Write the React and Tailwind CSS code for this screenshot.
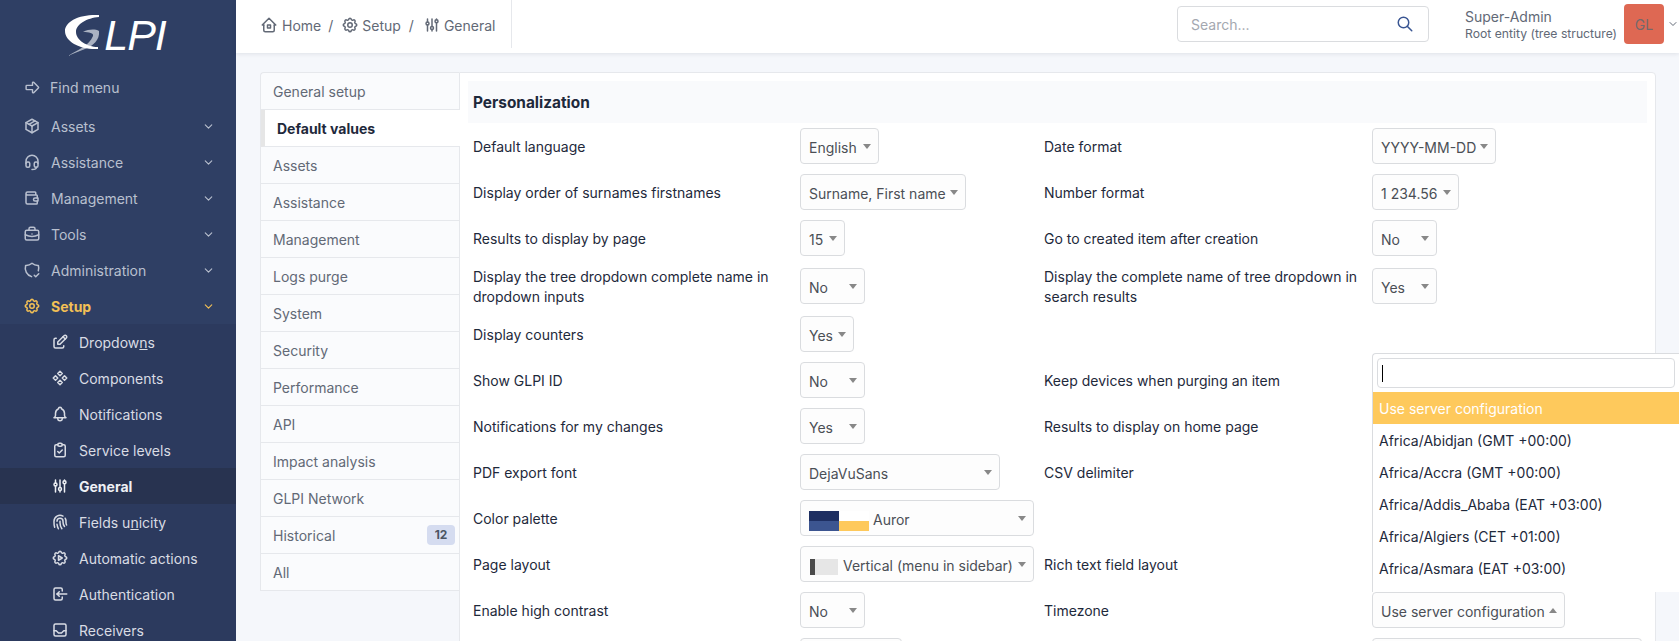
import React from 'react';
import {
  TbArrowBigRight, TbPackage, TbHeadset, TbWallet, TbBriefcase, TbShieldCheck, TbSettings,
  TbEdit, TbComponents, TbBell, TbClipboardCheck, TbAdjustments, TbFingerprint,
  TbSettingsAutomation, TbLogin, TbInbox, TbChevronDown, TbSearch, TbHome2,
} from 'react-icons/tb';

const topMenu = [
  { label: 'Assets', icon: TbPackage },
  { label: 'Assistance', icon: TbHeadset },
  { label: 'Management', icon: TbWallet },
  { label: 'Tools', icon: TbBriefcase },
  { label: 'Administration', icon: TbShieldCheck },
];

const subMenu = [
  { label: <>Dropdow<u>n</u>s</>, icon: TbEdit },
  { label: 'Components', icon: TbComponents },
  { label: 'Notifications', icon: TbBell },
  { label: 'Service levels', icon: TbClipboardCheck },
  { label: 'General', icon: TbAdjustments, active: true },
  { label: <>Fields u<u>n</u>icity</>, icon: TbFingerprint },
  { label: 'Automatic actions', icon: TbSettingsAutomation },
  { label: 'Authentication', icon: TbLogin },
  { label: 'Receivers', icon: TbInbox },
];

const tabs = [
  'General setup', 'Default values', 'Assets', 'Assistance', 'Management', 'Logs purge', 'System',
  'Security', 'Performance', 'API', 'Impact analysis', 'GLPI Network', 'Historical', 'All',
];

const zones = [
  'Africa/Abidjan (GMT +00:00)',
  'Africa/Accra (GMT +00:00)',
  'Africa/Addis_Ababa (EAT +03:00)',
  'Africa/Algiers (CET +01:00)',
  'Africa/Asmara (EAT +03:00)',
];

const Logo = () => (
  <div className="flex items-start justify-center h-[69px] pt-[14px] pr-[5px]">
    <svg width="36" height="44" viewBox="0 0 36 44" className="shrink-0">
      <path d="M3 42 C12 36 24 32 28 22 C29 19 24 18 18 18 C24 15 30 15 34 17 C35 26 28 32 20 35 C14 37 8 40 3 42Z" fill="#aab2c2" />
      <path d="M34 1 C15 0 0 7 0 17 C0 28 16 36 33 35 L33 33 C22 33 11 26 11 18 C11 10 22 4 34 3Z" fill="#fff" />
    </svg>
    <span className="text-white text-[43px] leading-[42px] italic font-['Liberation_Sans',sans-serif] tracking-[-1px] ml-[3px]">LPI</span>
  </div>
);

const Select = ({ w, children, up }) => (
  <div className={`${w} h-9 flex items-center justify-between pl-[8px] pr-[7px] border border-[#dadcdf] rounded bg-[#fdfdfd] text-[#4b4f56] whitespace-nowrap`}>
    <span className="flex items-center pt-[2px]">{children}</span>
    <span className={up
      ? 'w-0 h-0 border-x-4 border-x-transparent border-b-[5px] border-b-[#888]'
      : 'w-0 h-0 border-x-4 border-x-transparent border-t-[5px] border-t-[#888]'} />
  </div>
);

const Row = ({ h = 'h-[46px]', label, left, label2, right }) => (
  <div className={`grid grid-cols-[327px_244px_328px_1fr] items-center ${h}`}>
    <div className="leading-[20px] pr-2 pt-px">{label}</div>
    <div>{left}</div>
    <div className="leading-[20px] pr-2 pt-px">{label2}</div>
    <div>{right}</div>
  </div>
);

const Sidebar = () => (
  <aside className="w-[236px] shrink-0 h-full bg-[#2f3f64] text-[#b9c0cf] overflow-hidden">
    <Logo />
    <div className="flex items-center h-9 pl-[24px] gap-[9px]">
      <TbArrowBigRight size={17} />
      <span>Find menu</span>
    </div>
    <div className="h-[3px]" />
    {topMenu.map(({ label, icon: Icon }) => (
      <div key={label} className="flex items-center h-9 pl-[23px] pr-[21px]">
        <Icon size={18} />
        <span className="ml-[10px] flex-1">{label}</span>
        <TbChevronDown size={13} />
      </div>
    ))}
    <div className="flex items-center h-9 pl-[23px] pr-[21px] text-[#f3c055]">
      <TbSettings size={18} />
      <span className="ml-[10px] flex-1 font-bold">Setup</span>
      <TbChevronDown size={13} />
    </div>
    <div className="bg-[#2c3a5e] text-[#d9dce4]">
      {subMenu.map(({ label, icon: Icon, active }, i) => (
        <div key={i} className={`flex items-center h-9 pl-[51px] ${active ? 'bg-[#283350] font-bold text-[#eef0f4]' : ''}`}>
          <Icon size={18} />
          <span className="ml-[10px]">{label}</span>
        </div>
      ))}
    </div>
  </aside>
);

const Header = () => (
  <header className="h-[53px] shrink-0 bg-white shadow-[0_1px_4px_rgba(30,41,59,0.1)] flex items-start text-[#626976]">
    <div className="h-12 w-[276px] border-r border-[#e6e8ec] flex items-center pl-[24px] pt-[2px] whitespace-nowrap">
      <TbHome2 size={18} />
      <span className="ml-1">Home</span>
      <span className="ml-[7px] mr-[8px]">/</span>
      <TbSettings size={18} />
      <span className="ml-[3px]">Setup</span>
      <span className="ml-[8px] mr-[9px]">/</span>
      <TbAdjustments size={18} />
      <span className="ml-[3px]">General</span>
    </div>
    <div className="flex-1 flex items-start pt-[6px] justify-end">
      <div className="w-[252px] h-9 border border-[#dadcdf] rounded flex items-center justify-between pl-[13px] pr-[14px]">
        <span className="text-[#a4a8b0]">Search...</span>
        <TbSearch size={18} className="text-[#3a5693]" />
      </div>
      <div className="ml-[36px] -mt-[1px] w-[159px] leading-[17px] pt-[3px] whitespace-nowrap">
        <div>Super-Admin</div>
        <div className="text-[12.2px]">Root entity (tree structure)</div>
      </div>
      <div className="-mt-[2px] w-10 h-10 rounded bg-[#de6853] text-[#72686c] flex items-center justify-center">GL</div>
      <div className="w-[15px] h-10 -mt-[2px] flex items-center justify-end">
        <TbChevronDown size={12} />
      </div>
    </div>
  </header>
);

const Tabs = () => (
  <div className="w-[199px] shrink-0 self-start border-l border-t border-[#e6e8ec] bg-[#fafbfd] text-[#626976] rounded-tl">
    {tabs.map((t) => t === 'Default values' ? (
      <div key={t} className="h-[37px] -mr-px pl-[12px] relative flex items-center bg-white border-l-4 border-l-[#e6e6e6] border-b border-b-[#e6e8ec] font-bold text-[#1e293b]">{t}</div>
    ) : (
      <div key={t} className="h-[37px] pl-[12px] pr-[4px] flex items-center justify-between border-b border-[#e6e8ec]">
        <span>{t}</span>
        {t === 'Historical' && (
          <span className="w-7 h-5 rounded bg-[#d5dcf0] text-[#4b5563] text-xs font-bold flex items-center justify-center">12</span>
        )}
      </div>
    ))}
  </div>
);

const Timezones = () => (
  <div className="absolute left-[1372px] top-[353px] w-[307px] h-[239px] bg-white border-l border-t border-[#dadcdf] rounded-tl text-[#1e293b]">
    <div className="mx-[4px] mt-[4px] h-[30px] border border-[#dadcdf] rounded flex items-center pl-[4px]">
      <span className="w-px h-[17px] bg-black" />
    </div>
    <div className="mt-[4px] h-8 bg-[#fec95c] text-white flex items-center pl-[6px]">Use server configuration</div>
    {zones.map((z) => (
      <div key={z} className="h-8 flex items-center pl-[6px]">{z}</div>
    ))}
  </div>
);

export default function App() {
  return (
    <div className="relative h-screen overflow-hidden flex bg-[#f5f7fb] text-[14px] font-['Inter',sans-serif]">
      <Sidebar />
      <div className="flex-1 min-w-0 flex flex-col h-full">
        <Header />
        <main className="flex-1 min-h-0 pl-6 pr-[23px] pt-[19px] overflow-hidden">
          <div className="flex h-[600px]">
            <Tabs />
            <div className="flex-1 border border-[#e6e8ec] rounded-r bg-white pl-[8px] pr-[8px] pt-[8px] text-[#1e293b]">
              <div className="h-[42px] bg-[#f9fafc] flex items-center pl-[5px] pt-px font-bold text-[15.4px]">Personalization</div>
              <div className="pl-[5px]">
                <Row label="Default language" left={<Select w="w-[79px]">English</Select>} label2="Date format" right={<Select w="w-[124px]">YYYY-MM-DD</Select>} />
                <Row label="Display order of surnames firstnames" left={<Select w="w-[166px]">Surname, First name</Select>} label2="Number format" right={<Select w="w-[87px]">1 234.56</Select>} />
                <Row label="Results to display by page" left={<Select w="w-[45px]">15</Select>} label2="Go to created item after creation" right={<Select w="w-[65px]">No</Select>} />
                <Row h="h-[50px]" label="Display the tree dropdown complete name in dropdown inputs" left={<Select w="w-[65px]">No</Select>} label2="Display the complete name of tree dropdown in search results" right={<Select w="w-[65px]">Yes</Select>} />
                <Row label="Display counters" left={<Select w="w-[54px]">Yes</Select>} />
                <Row label="Show GLPI ID" left={<Select w="w-[65px]">No</Select>} label2="Keep devices when purging an item" />
                <Row label="Notifications for my changes" left={<Select w="w-[65px]">Yes</Select>} label2="Results to display on home page" />
                <Row label="PDF export font" left={<Select w="w-[200px]">DejaVuSans</Select>} label2="CSV delimiter" />
                <Row label="Color palette" left={
                  <Select w="w-[234px]">
                    <span className="grid grid-cols-[30px_30px] grid-rows-[10px_10px] mt-[4px] mr-[4px]">
                      <span className="bg-[#1e2f62]" />
                      <span className="bg-white" />
                      <span className="bg-[#3c5590]" />
                      <span className="bg-[#fec95c]" />
                    </span>
                    Auror
                  </Select>
                } />
                <Row label="Page layout" left={
                  <Select w="w-[234px]">
                    <span className="flex h-4 mt-[4px] ml-px mr-[5px]">
                      <span className="w-[5px] bg-[#4a4a4a]" />
                      <span className="w-[23px] bg-[#e6e6e6]" />
                    </span>
                    Vertical (menu in sidebar)
                  </Select>
                } label2="Rich text field layout" />
                <Row label="Enable high contrast" left={<Select w="w-[65px]">No</Select>} label2="Timezone" right={<Select w="w-[193px]" up>Use server configuration</Select>} />
                <Row left={<Select w="w-[102px]">&nbsp;</Select>} right={<Select w="w-[270px]">&nbsp;</Select>} />
              </div>
            </div>
          </div>
        </main>
      </div>
      <Timezones />
    </div>
  );
}
